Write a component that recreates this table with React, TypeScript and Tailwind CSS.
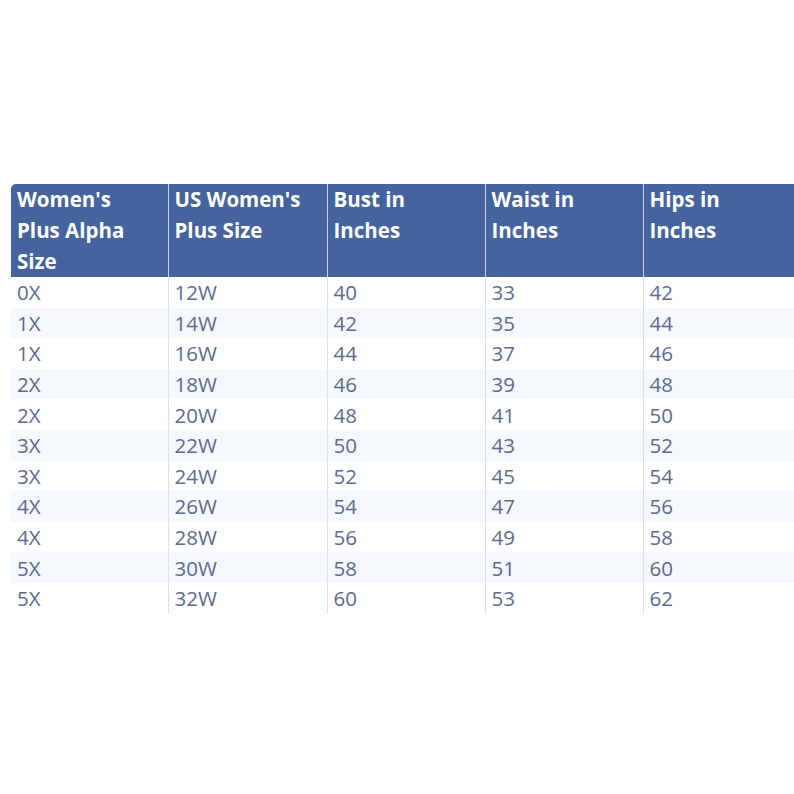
const HEADERS = [
    "Women's Plus Alpha Size",
    "US Women's Plus Size",
    "Bust in Inches",
    "Waist in Inches",
    "Hips in Inches",
];

const ROWS = [
    ["0X", "12W", "40", "33", "42"],
    ["1X", "14W", "42", "35", "44"],
    ["1X", "16W", "44", "37", "46"],
    ["2X", "18W", "46", "39", "48"],
    ["2X", "20W", "48", "41", "50"],
    ["3X", "22W", "50", "43", "52"],
    ["3X", "24W", "52", "45", "54"],
    ["4X", "26W", "54", "47", "56"],
    ["4X", "28W", "56", "49", "58"],
    ["5X", "30W", "58", "51", "60"],
    ["5X", "32W", "60", "53", "62"],
];

const WIDTHS = ["w-[157px]", "w-[159px]", "w-[158px]", "w-[158px]", "w-[158px]"];

export default function App() {
    return (
        <main
            className="w-[794px] h-[794px] bg-white overflow-hidden pt-[184px] pl-[11px]"
            style={{ fontFamily: '"Open Sans", "Noto Sans", sans-serif' }}
        >
            <table className="w-[790px] table-fixed border-collapse text-[20.5px]">
                <thead>
                    <tr className="bg-[#45649e] text-white">
                        {HEADERS.map((h, i) => (
                            <th
                                key={h}
                                className={`${WIDTHS[i]} h-[92px] align-top text-left font-bold leading-[31px] px-[6px] pt-0 ${
                                    i === 0 ? "rounded-tl-[5px]" : "border-l border-[#c7d2e6]"
                                }`}
                            >
                                <span className={i === 0 ? "block w-[120px]" : "block w-[135px]"}>{h}</span>
                            </th>
                        ))}
                    </tr>
                </thead>
                <tbody className="text-[#5d6b8f]">
                    {ROWS.map((row, r) => (
                        <tr key={r} className={r % 2 === 1 ? "bg-[#f5f8fc]" : "bg-white"}>
                            {row.map((cell, i) => (
                                <td
                                    key={i}
                                    className={`h-[30.6px] px-[6px] py-0 leading-[30px] ${
                                        i === 0 ? "" : "border-l border-[#dde1e8]"
                                    }`}
                                >
                                    {cell}
                                </td>
                            ))}
                        </tr>
                    ))}
                </tbody>
            </table>
        </main>
    );
}
